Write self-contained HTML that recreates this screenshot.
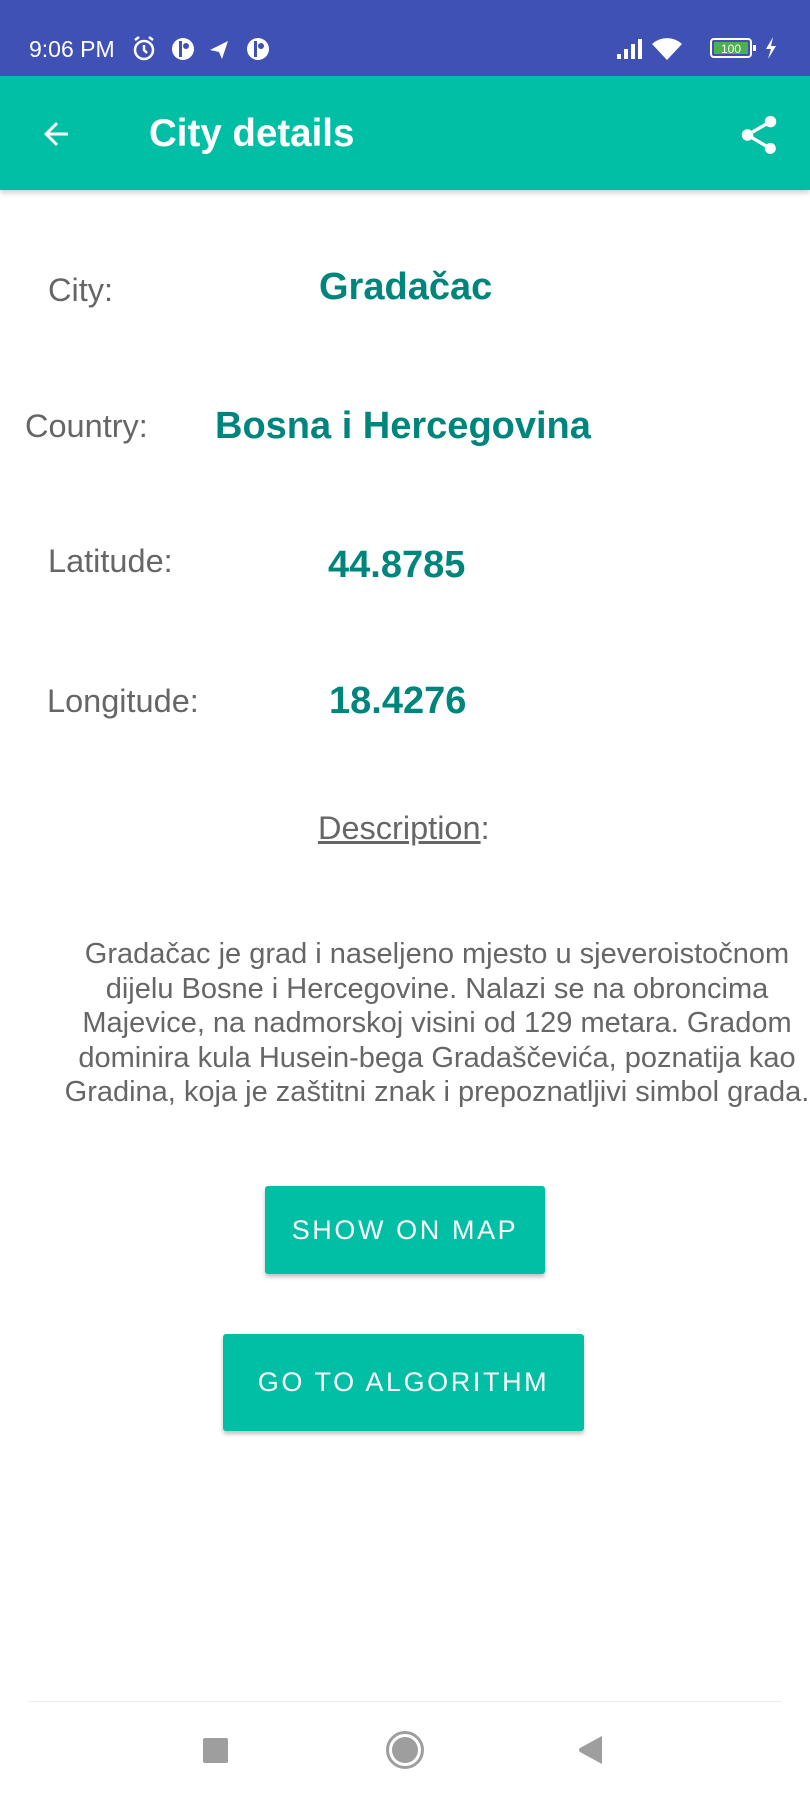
<!DOCTYPE html>
<html><head><meta charset="utf-8"><style>
*{margin:0;padding:0;box-sizing:border-box}
body{width:810px;height:1800px;position:relative;background:#fff;font-family:"Liberation Sans",sans-serif;overflow:hidden}
.a{position:absolute;white-space:nowrap}
.lbl{color:#666;font-size:32.5px;line-height:40px}
.val{color:#00857d;font-size:38px;font-weight:bold;line-height:44px}
.btn{position:absolute;background:#00bfa5;color:#fff;font-size:27px;letter-spacing:2.6px;display:flex;align-items:center;justify-content:center;box-shadow:0 3px 4px rgba(0,0,0,.25);border-radius:3px}
</style></head><body>
<div class="a" style="left:0;top:0;width:810px;height:76px;background:#3f51b5"></div>
<div class="a" style="left:29px;top:34px;color:#fff;font-size:23px;line-height:30px">9:06 PM</div>
<svg class="a" style="left:128px;top:33px" width="148" height="30" viewBox="0 0 148 30">
<g fill="none" stroke="#fff" stroke-width="2.5"><circle cx="16" cy="17" r="9"/><path d="M16 12v5l3 3M7 7l4-3M25 7l-4-3"/></g>
<circle cx="55" cy="16" r="11" fill="#fff"/><rect x="51" y="8" width="3" height="16" fill="#3f51b5"/><circle cx="58" cy="13" r="3" fill="#3f51b5"/>
<path d="M82 17l18-9-6 18-3-7z" fill="#fff"/>
<circle cx="130" cy="16" r="11" fill="#fff"/><rect x="126" y="8" width="3" height="16" fill="#3f51b5"/><circle cx="133" cy="13" r="3" fill="#3f51b5"/>
</svg>
<svg class="a" style="left:615px;top:34px" width="170" height="28" viewBox="0 0 170 28">
<g fill="#fff"><rect x="2" y="20" width="4" height="5"/><rect x="9" y="15" width="4" height="10"/><rect x="16" y="10" width="4" height="15"/><rect x="23" y="5" width="4" height="20"/>
<path d="M52 26l-15-16a22 22 0 0 1 30 0z"/></g>
<rect x="96" y="5" width="40" height="18" rx="3" fill="none" stroke="#fff" stroke-width="2"/><rect x="99" y="8" width="34" height="12" fill="#4caf50"/>
<text x="116" y="19" fill="#fff" font-size="12" text-anchor="middle" font-family="Liberation Sans">100</text>
<rect x="138" y="11" width="3" height="6" fill="#fff"/>
<path d="M158 3l-7 12h5l-3 10 8-13h-5z" fill="#fff"/></svg>
<div class="a" style="left:0;top:76px;width:810px;height:114px;background:#00bfa5;box-shadow:0 3px 5px rgba(0,0,0,.18)"></div>
<svg class="a" style="left:38px;top:116px" width="36" height="36" viewBox="0 0 24 24"><path d="M20 11H7.8l5.6-5.6L12 4l-8 8 8 8 1.4-1.4L7.8 13H20z" fill="#fff"/></svg>
<div class="a" style="left:149px;top:111px;color:#fff;font-size:38.5px;font-weight:bold;line-height:46px">City details</div>
<svg class="a" style="left:736px;top:112px" width="46" height="46" viewBox="0 0 24 24"><path d="M18 16.1c-.8 0-1.4.3-2 .8l-7.1-4.2c.1-.2.1-.5.1-.7s0-.5-.1-.7L16 7.2c.5.5 1.2.8 2 .8 1.7 0 3-1.3 3-3s-1.3-3-3-3-3 1.3-3 3c0 .2 0 .5.1.7L8 9.8C7.5 9.3 6.8 9 6 9c-1.7 0-3 1.3-3 3s1.3 3 3 3c.8 0 1.5-.3 2-.8l7.1 4.2c-.1.2-.1.4-.1.6 0 1.6 1.3 2.9 2.9 2.9s2.9-1.3 2.9-2.9-1.3-2.9-2.9-2.9z" fill="#fff"/></svg>

<div class="a lbl" style="left:48px;top:270px">City:</div>
<div class="a val" style="left:319px;top:265px">Gradačac</div>
<div class="a lbl" style="left:25px;top:406px">Country:</div>
<div class="a val" style="left:215px;top:404px">Bosna i Hercegovina</div>
<div class="a lbl" style="left:48px;top:541px">Latitude:</div>
<div class="a val" style="left:328px;top:543px">44.8785</div>
<div class="a lbl" style="left:47px;top:681px">Longitude:</div>
<div class="a val" style="left:329px;top:679px">18.4276</div>
<div class="a lbl" style="left:318px;top:808px"><u>Description</u>:</div>
<div class="a" style="left:0;width:874px;top:937px;text-align:center;color:#666;font-size:29px;line-height:34.6px">Gradačac je grad i naseljeno mjesto u sjeveroistočnom<br>dijelu Bosne i Hercegovine. Nalazi se na obroncima<br>Majevice, na nadmorskoj visini od 129 metara. Gradom<br>dominira kula Husein-bega Gradaščevića, poznatija kao<br>Gradina, koja je zaštitni znak i prepoznatljivi simbol grada.</div>
<div class="btn" style="left:265px;top:1186px;width:280px;height:88px">SHOW ON MAP</div>
<div class="btn" style="left:223px;top:1334px;width:361px;height:97px">GO TO ALGORITHM</div>

<div class="a" style="left:28px;top:1701px;width:754px;height:1px;background:#eee"></div>
<div class="a" style="left:203px;top:1738px;width:25px;height:25px;background:#9e9e9e;border-radius:2px"></div>
<div class="a" style="left:386px;top:1731px;width:38px;height:38px;border:3px solid #9e9e9e;border-radius:50%;padding:3px"><div style="width:100%;height:100%;background:#9e9e9e;border-radius:50%"></div></div>
<svg class="a" style="left:576px;top:1735px" width="28" height="30" viewBox="0 0 28 30"><path d="M26 1v28L4 17q-2-2 0-4z" fill="#9e9e9e"/></svg>
</body></html>
